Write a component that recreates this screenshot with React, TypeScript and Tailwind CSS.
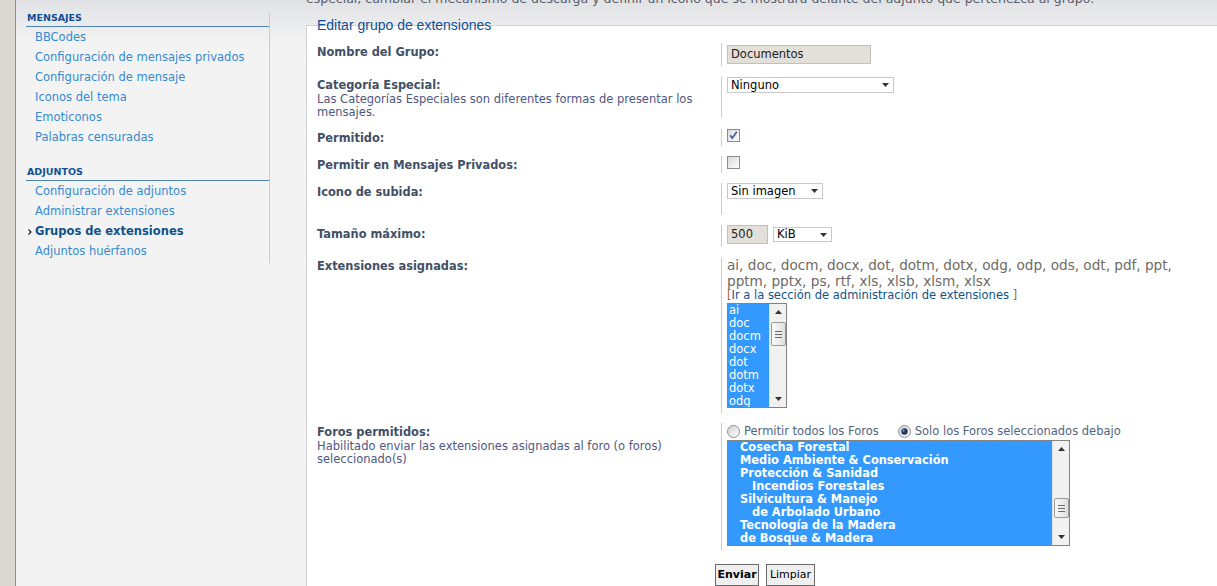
import React from "react";

const menu = [
  {
    title: "MENSAJES",
    items: [
      "BBCodes",
      "Configuración de mensajes privados",
      "Configuración de mensaje",
      "Iconos del tema",
      "Emoticonos",
      "Palabras censuradas",
    ],
  },
  {
    title: "ADJUNTOS",
    items: [
      "Configuración de adjuntos",
      "Administrar extensiones",
      "Grupos de extensiones",
      "Adjuntos huérfanos",
    ],
  },
];

const extensions = ["ai", "doc", "docm", "docx", "dot", "dotm", "dotx", "odg"];

const forums = [
  { name: "Cosecha Forestal", sub: false },
  { name: "Medio Ambiente & Conservación", sub: false },
  { name: "Protección & Sanidad", sub: false },
  { name: "Incendios Forestales", sub: true },
  { name: "Silvicultura & Manejo", sub: false },
  { name: "de Arbolado Urbano", sub: true },
  { name: "Tecnología de la Madera", sub: false },
  { name: "de Bosque & Madera", sub: false },
];

const Arrow = ({ up = false }: { up?: boolean }) => (
  <svg width="7" height="4" viewBox="0 0 7 4">
    <polygon points={up ? "0,4 7,4 3.5,0" : "0,0 7,0 3.5,4"} fill="#333" />
  </svg>
);

const SelectBox = ({ value, className }: { value: string; className: string }) => (
  <div
    className={`flex items-center justify-between border border-[#c9c9c9] bg-white pl-[3px] pr-[4px] text-[11.5px] leading-[13px] text-black ${className}`}
  >
    <span>{value}</span>
    <Arrow />
  </div>
);

const Checkbox = ({ checked }: { checked: boolean }) => (
  <svg width="13" height="13" viewBox="0 0 13 13">
    <defs>
      <linearGradient id={checked ? "cbA" : "cbB"} x1="0" y1="0" x2="1" y2="1">
        <stop offset="0" stopColor="#d8d8d8" />
        <stop offset="1" stopColor="#ffffff" />
      </linearGradient>
    </defs>
    <rect x="0.5" y="0.5" width="12" height="12" fill={`url(#${checked ? "cbA" : "cbB"})`} stroke="#8d8d8d" />
    {checked && <path d="M3.2 6.3 L5.3 9.2 L9.8 2.8" stroke="#3f55a0" strokeWidth="1.6" fill="none" />}
  </svg>
);

const Radio = ({ checked }: { checked: boolean }) => (
  <svg width="13" height="13" viewBox="0 0 13 13">
    <defs>
      <linearGradient id={checked ? "rdA" : "rdB"} x1="0" y1="0" x2="1" y2="1">
        <stop offset="0" stopColor="#cfcfcf" />
        <stop offset="1" stopColor="#ffffff" />
      </linearGradient>
    </defs>
    <circle cx="6.5" cy="6.5" r="6" fill={`url(#${checked ? "rdA" : "rdB"})`} stroke="#8f8f8f" />
    {checked && (
      <>
        <circle cx="6.5" cy="6.5" r="3.2" fill="#1f3a5c" />
        <circle cx="5.6" cy="5.6" r="1.1" fill="#7fa7d6" />
      </>
    )}
  </svg>
);

const Scrollbar = ({ gap, thumb }: { gap: string; thumb: string }) => (
  <div className="flex w-[17px] flex-col items-center border-l border-[#e2e2e2] bg-[#f1f1f1]">
    <div className="flex h-[16px] w-full items-center justify-center">
      <Arrow up />
    </div>
    <div className={gap} />
    <div
      className={`flex w-[15px] flex-col items-center justify-center gap-[2px] rounded-[2px] border border-[#9a9a9a] bg-[linear-gradient(90deg,#fafafa,#dedede)] ${thumb}`}
    >
      <div className="h-px w-[7px] bg-[#6b6b6b]" />
      <div className="h-px w-[7px] bg-[#6b6b6b]" />
      <div className="h-px w-[7px] bg-[#6b6b6b]" />
    </div>
    <div className="flex-1" />
    <div className="flex h-[16px] w-full items-center justify-center">
      <Arrow />
    </div>
  </div>
);

const Row = ({
  label,
  desc,
  height,
  children,
}: {
  label: string;
  desc?: React.ReactNode;
  height: string;
  children: React.ReactNode;
}) => (
  <div className="flex">
    <div className="w-[404px] pt-[2px]">
      <div className="text-[11.4px] font-bold leading-[15px] text-[#425067]">{label}</div>
      {desc && <div className="text-[11.5px] leading-[13px] text-[#4f5783]">{desc}</div>}
    </div>
    <div className={`border-l border-[#cccccc] pl-[5px] ${height}`}>{children}</div>
  </div>
);

export default function App() {
  return (
    <div className="flex h-[586px] w-[1217px] overflow-hidden bg-[linear-gradient(#e1e2e5,#f3f3f3_45px)] font-['DejaVu_Sans',sans-serif]">
      <div className="w-[16px] shrink-0 border-r border-[#8f8f8f] bg-[#dcd9d2]" />

      <aside className="w-[290px] shrink-0">
        <div className="ml-[10px] w-[244px] border-r border-[#cccccc] pb-[1px]">
          {menu.map((section, si) => (
            <div key={section.title} className={si === 0 ? "mt-[12px]" : "mt-[18px]"}>
              <h3 className="border-b border-[#4f81b5] pb-[2px] pl-[1px] text-[9.5px] font-bold leading-[12px] text-[#115098]">
                {section.title}
              </h3>
              <ul className="pt-[1px]">
                {section.items.map((item) => {
                  const active = item === "Grupos de extensiones";
                  return (
                    <li key={item} className="flex h-[20px] items-center text-[11.5px]">
                      <span className="flex w-[9px] justify-start pl-[2px]">
                        {active && (
                          <svg width="4" height="6" viewBox="0 0 4 6">
                            <path d="M0.5 0.5 L3 3 L0.5 5.5" stroke="#222" strokeWidth="1.2" fill="none" />
                          </svg>
                        )}
                      </span>
                      <span className={active ? "font-bold text-[#105289]" : "text-[#368ad2]"}>{item}</span>
                    </li>
                  );
                })}
              </ul>
            </div>
          ))}
        </div>
      </aside>

      <main className="flex min-w-0 flex-1 flex-col">
        <div className="h-[25px] overflow-hidden">
          <p className="-mt-[9px] whitespace-nowrap text-[12.5px] leading-[16px] text-[#575c6a]">
            especial, cambiar el mecanismo de descarga y definir un icono que se mostrará delante del adjunto que
            pertenezca al grupo.
          </p>
        </div>

        <div className="flex-1 border-l border-t border-[#d2d2d2] bg-white pl-[10px]">
          <div className="-mt-[9px] h-[16px] font-['Liberation_Sans',sans-serif] text-[14px] leading-[16px] text-[#115098]">
            Editar grupo de extensiones
          </div>

          <div className="mt-[10px] flex flex-col gap-[10px]">
            <Row label="Nombre del Grupo:" height="h-[23px] pt-[2px]">
              <div className="flex h-[19px] w-[144px] items-center border border-[#c3c0b9] bg-[#e3e0da] pl-[3px] text-[11.5px] text-[#222]">
                Documentos
              </div>
            </Row>

            <Row
              label="Categoría Especial:"
              desc={
                <>
                  Las Categorías Especiales son diferentes formas de presentar los
                  <br />
                  mensajes.
                </>
              }
              height="h-[42px] pt-[1px]"
            >
              <SelectBox value="Ninguno" className="h-[16px] w-[167px]" />
            </Row>

            <Row label="Permitido:" height="h-[17px]">
              <Checkbox checked />
            </Row>

            <Row label="Permitir en Mensajes Privados:" height="h-[17px]">
              <Checkbox checked={false} />
            </Row>

            <Row label="Icono de subida:" height="h-[32px]">
              <SelectBox value="Sin imagen" className="h-[16px] w-[96px]" />
            </Row>

            <Row label="Tamaño máximo:" height="h-[22px]">
              <div className="flex items-center gap-[5px]">
                <div className="flex h-[19px] w-[41px] items-center border border-[#c3c0b9] bg-[#e3e0da] pl-[3px] text-[11.5px] text-[#222]">
                  500
                </div>
                <SelectBox value="KiB" className="h-[15px] w-[59px]" />
              </div>
            </Row>

            <Row label="Extensiones asignadas:" height="h-[156px]">
              <div className="w-[480px] text-[13.6px] leading-[16px] text-[#6e6a66]">
                ai, doc, docm, docx, dot, dotm, dotx, odg, odp, ods, odt, pdf, ppt,
                <br />
                pptm, pptx, ps, rtf, xls, xlsb, xlsm, xlsx
              </div>
              <div className="text-[11.5px] leading-[13px] text-[#9c6434]">
                [<span className="text-[#105289]">Ir a la sección de administración de extensiones </span>]
              </div>
              <div className="mt-[1px] flex h-[105px] w-[60px] border border-[#828282]">
                <div className="flex-1 overflow-hidden bg-[#3399ff] pl-[1px] text-[11.5px] leading-[13px] text-white">
                  {extensions.map((e) => (
                    <div key={e}>{e}</div>
                  ))}
                </div>
                <Scrollbar gap="h-[2px]" thumb="h-[24px]" />
              </div>
            </Row>

            <Row
              label="Foros permitidos:"
              desc={
                <>
                  Habilitado enviar las extensiones asignadas al foro (o foros)
                  <br />
                  seleccionado(s)
                </>
              }
              height="h-[127px]"
            >
              <div className="flex h-[17px] items-center text-[11.5px] text-[#536482]">
                <Radio checked={false} />
                <span className="ml-[4px]">Permitir todos los Foros</span>
                <span className="ml-[19px] flex items-center">
                  <Radio checked />
                </span>
                <span className="ml-[4px]">Solo los Foros seleccionados debajo</span>
              </div>
              <div className="flex h-[106px] w-[343px] border border-[#828282]">
                <div className="flex-1 overflow-hidden bg-[#3399ff] text-[11.4px] font-bold leading-[13px] text-white">
                  {forums.map((f) => (
                    <div key={f.name} className={f.sub ? "pl-[24px]" : "pl-[12px]"}>
                      {f.name}
                    </div>
                  ))}
                </div>
                <Scrollbar gap="h-[41px]" thumb="h-[20px]" />
              </div>
            </Row>
          </div>

          <div className="mt-[14px] flex justify-center gap-[7px] pr-[4px] text-[11px] text-black">
            <button className="h-[22px] w-[44px] border border-[#6a6a6a] bg-[#efefef] font-bold">Enviar</button>
            <button className="h-[22px] w-[49px] border border-[#6a6a6a] bg-[#efefef]">Limpiar</button>
          </div>
        </div>
      </main>
    </div>
  );
}
